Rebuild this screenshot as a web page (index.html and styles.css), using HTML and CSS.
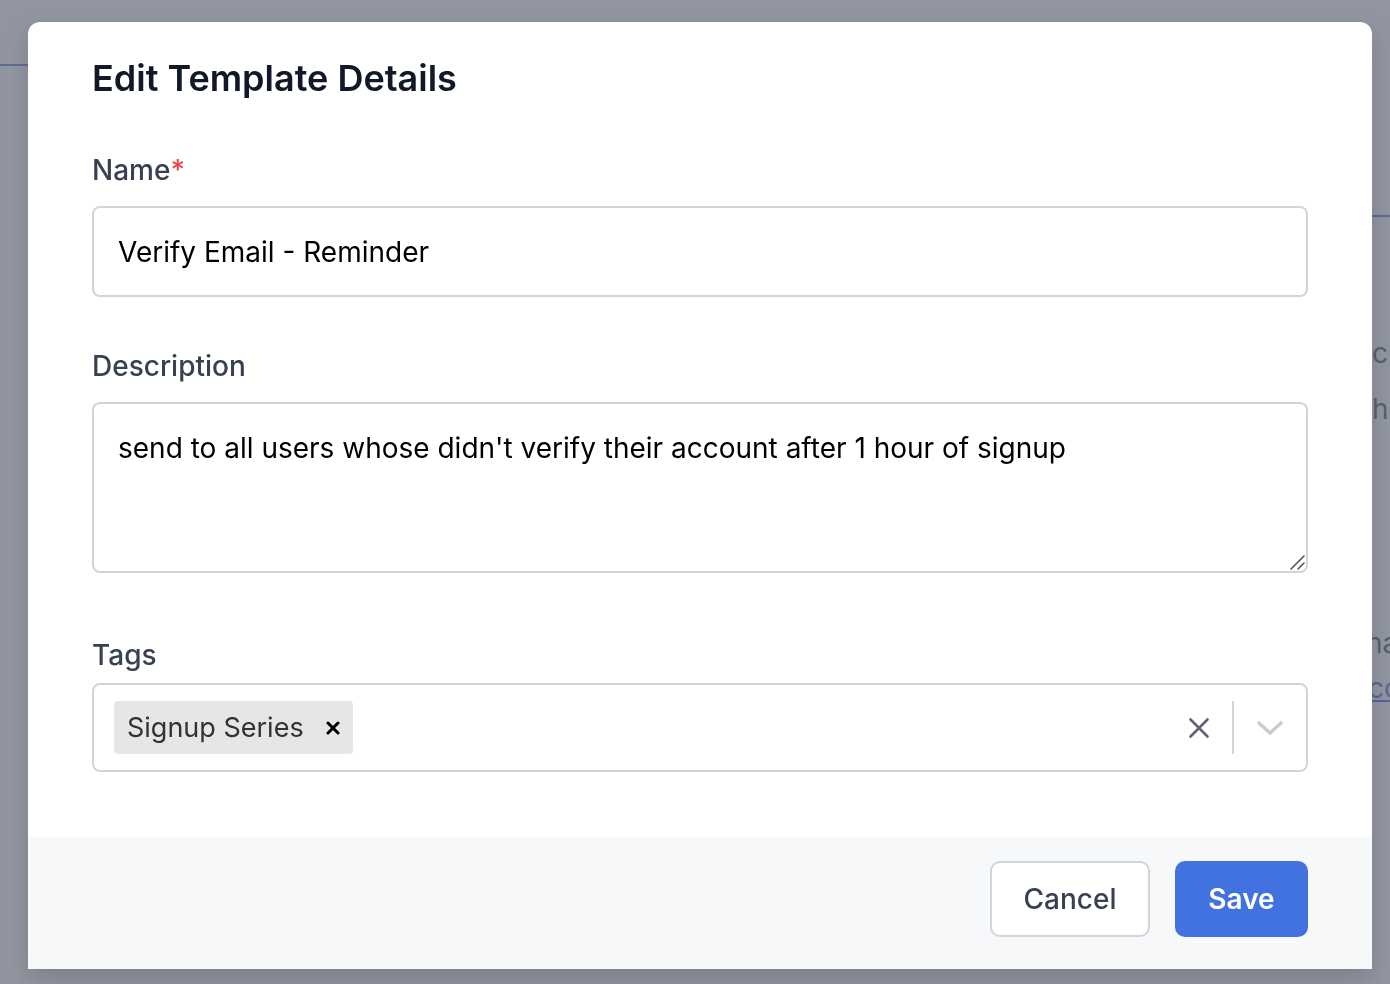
FILE: index.html
```html
<!DOCTYPE html>
<html lang="en">
  <head>
    <meta charset="UTF-8" />
    <title>Edit Template Details</title>
    <link rel="stylesheet" href="styles.css">
  </head>
  <body>
    <!-- page behind the dialog -->
    <div class="page">
      <aside class="sidebar">
        <div class="sidebar-head"></div>
      </aside>
      <main class="main">
        <div class="main-rule"></div>
        <p class="main-text first">customers</p>
        <p class="main-text">hour</p>
        <p class="main-text third">has</p>
        <a class="main-link" href="#">copy</a>
      </main>
    </div>

    <div class="overlay">
      <div class="modal">
        <div class="modal-body">
          <h2 class="modal-title">Edit Template Details</h2>

          <label class="field-label" for="name">Name<span class="required">*</span></label>
          <input class="text-input" id="name" type="text" value="Verify Email - Reminder" />

          <label class="field-label label-desc" for="desc">Description</label>
          <div class="area-wrap">
            <textarea class="text-area" id="desc">send to all users whose didn't verify their account after 1 hour of signup</textarea>
            <svg class="area-grip" width="16" height="16" viewBox="0 0 16 16">
              <path d="M2 15 L15 2 M9 15 L15 9" stroke="#555" stroke-width="1.6" stroke-linecap="round" />
            </svg>
          </div>

          <label class="field-label label-tags">Tags</label>
          <div class="select">
            <div class="select-values">
              <div class="chip">
                <span class="chip-label">Signup Series</span>
                <span class="chip-remove">
                  <svg width="14" height="14" viewBox="0 0 14 14">
                    <path d="M2 2 L12 12 M12 2 L2 12" stroke="#000" stroke-width="3" stroke-linecap="round" />
                  </svg>
                </span>
              </div>
            </div>
            <div class="select-clear">
              <svg width="22" height="22" viewBox="0 0 22 22">
                <path d="M2.5 2.5 L19.5 19.5 M19.5 2.5 L2.5 19.5" stroke="#5f6470" stroke-width="2.6" stroke-linecap="round" />
              </svg>
            </div>
            <span class="select-sep"></span>
            <div class="select-arrow">
              <svg width="26" height="16" viewBox="0 0 26 16">
                <path d="M2 3 L13 13 L24 3" fill="none" stroke="#cccccc" stroke-width="3.6" stroke-linecap="round" stroke-linejoin="round" />
              </svg>
            </div>
          </div>
        </div>

        <div class="modal-footer">
          <button class="btn btn-cancel" type="button">Cancel</button>
          <button class="btn btn-save" type="button">Save</button>
        </div>
      </div>
    </div>
  </body>
</html>
```

FILE: styles.css
```css
* {
  box-sizing: border-box;
}
body {
  margin: 0;
  height: 984px;
  overflow: hidden;
  font-family: Inter, "Noto Sans", sans-serif;
  background-color: #ffffff;
}

/* page under the overlay */
.page {
  display: flex;
  height: 100%;
}
.sidebar {
  width: 240px;
  flex-shrink: 0;
}
.sidebar-head {
  height: 66px;
  border-bottom: 2px solid #3f5bd0;
}
.main {
  flex: 1;
  padding-left: 1132px;
  padding-top: 215px;
  white-space: nowrap;
  overflow: hidden;
}
.main-rule {
  border-top: 2px solid #3f5bd0;
}
.main-text {
  margin: 0;
  font-size: 28px;
  line-height: 56px;
  color: #1f2937;
}
.main-text.first {
  margin-top: 108px;
}
.main-text.third {
  margin-top: 178px;
  margin-left: -6px;
}
.main-link {
  display: block;
  margin-left: -4px;
  font-size: 28px;
  line-height: 34px;
  color: #3b3fd0;
}

/* dialog */
.overlay {
  position: fixed;
  inset: 0;
  background-color: rgba(107, 114, 128, 0.75);
  padding: 22px 18px 0 28px;
}
.modal {
  width: 1344px;
  background-color: #ffffff;
  border-radius: 12px 12px 0 0;
  overflow: hidden;
  box-shadow: 0 10px 25px rgba(0, 0, 0, 0.15);
}
.modal-body {
  display: flex;
  flex-direction: column;
  padding: 36px 64px 65px 64px;
}
.modal-title {
  margin: 0;
  font-size: 36px;
  line-height: 40px;
  font-weight: 600;
  color: #111827;
}
.field-label {
  display: block;
  margin-top: 55px;
  font-size: 28px;
  line-height: 34px;
  font-weight: 500;
  color: #374151;
}
.required {
  color: #ef4444;
}
.label-desc {
  margin-top: 52px;
}
.label-tags {
  margin-top: 65px;
}
.text-input,
.text-area {
  display: block;
  width: 100%;
  border: 2px solid #d1d5db;
  border-radius: 8px;
  font-family: Inter, "Noto Sans", sans-serif;
  font-size: 28px;
  color: #000000;
  background-color: #ffffff;
  padding: 0 24px;
  outline: none;
}
.text-input {
  margin-top: 19px;
  height: 91px;
}
.area-wrap {
  position: relative;
  margin-top: 19px;
}
.text-area {
  height: 171px;
  padding-top: 27px;
  line-height: 34px;
  resize: none;
}
.area-grip {
  position: absolute;
  right: 3px;
  bottom: 3px;
}

/* tags select */
.select {
  display: flex;
  align-items: center;
  margin-top: 11px;
  height: 89px;
  border: 2px solid #d1d5db;
  border-radius: 8px;
}
.select-values {
  flex: 1;
  padding-left: 20px;
}
.chip {
  display: inline-flex;
  align-items: center;
  height: 53px;
  background-color: #e6e6e6;
  border-radius: 4px;
}
.chip-label {
  padding: 0 9px 0 13px;
  font-size: 27px;
  color: #333333;
}
.chip-remove {
  display: flex;
  align-items: center;
  justify-content: center;
  width: 40px;
  height: 100%;
}
.select-clear {
  display: flex;
  justify-content: center;
  width: 46px;
  margin-right: 10px;
}
.select-sep {
  width: 2px;
  height: 53px;
  background-color: #d6d6d6;
}
.select-arrow {
  display: flex;
  justify-content: center;
  width: 72px;
}

/* footer */
.modal-footer {
  display: flex;
  justify-content: flex-end;
  gap: 25px;
  height: 132px;
  padding: 24px 64px 0 64px;
  background-color: #f7f8fa;
}
.btn {
  height: 76px;
  border-radius: 10px;
  font-family: Inter, "Noto Sans", sans-serif;
  font-size: 28px;
  cursor: pointer;
}
.btn-cancel {
  width: 160px;
  border: 2px solid #d1d5db;
  background-color: #ffffff;
  color: #374151;
  font-weight: 500;
}
.btn-save {
  width: 133px;
  border: none;
  background-color: #4272df;
  color: #ffffff;
  font-weight: 600;
}
```
